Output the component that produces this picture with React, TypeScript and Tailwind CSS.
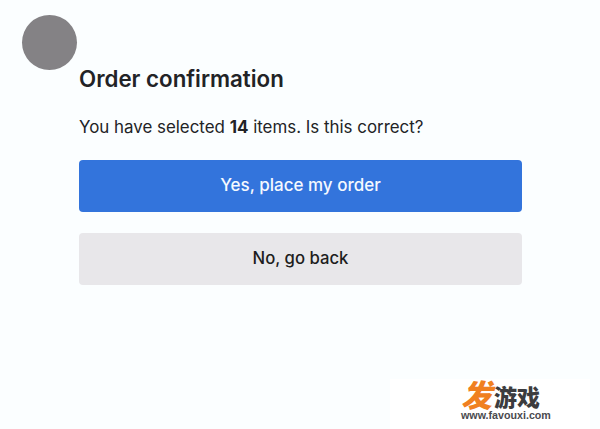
export default function App() {
  return (
    <div className="relative h-[429px] w-[600px] overflow-hidden bg-[#fbfeff] font-['Inter',sans-serif]">
      <div className="absolute left-[22px] top-[15px] h-[55px] w-[55px] rounded-full bg-[#848285]" />
      <div className="flex w-[522px] flex-col pl-[79px] pt-[64px]">
        <h1 className="text-[22.3px] leading-[30px] font-semibold text-[#222326]">Order confirmation</h1>
        <p className="mt-[21px] text-[16.9px] leading-[24px] text-[#222326]">
          You have selected <b className="font-bold">14</b> items. Is this correct?
        </p>
        <button className="mt-[21px] flex h-[52px] items-center justify-center rounded-[4px] bg-[#3374dc] pb-[1px] text-[17px] font-medium text-[#f5f9ff]">
          Yes, place my order
        </button>
        <button className="mt-[21px] flex h-[52px] items-center justify-center rounded-[4px] bg-[#e8e7ea] pb-[1px] text-[16.7px] font-medium text-[#1d1d20]">
          No, go back
        </button>
      </div>
      <div className="absolute bottom-0 left-[390px] flex h-[50px] w-[200px] flex-col items-start bg-white pl-[71px] pt-[2px]">
        <div className="flex h-[28px] items-end">
          <span className="mr-[2px] text-[31px] leading-[30px] font-black italic text-[#f08020] font-['Noto_Sans_CJK_SC',sans-serif]">发</span>
          <span className="text-[23px] leading-[25px] font-black text-[#3c3c3e] font-['Noto_Sans_CJK_SC',sans-serif]">游戏</span>
        </div>
        <div className="text-[10.7px] leading-[12px] font-bold text-[#4a4a4e] font-['Liberation_Sans',sans-serif]">www.favouxi.com</div>
      </div>
    </div>
  );
}
